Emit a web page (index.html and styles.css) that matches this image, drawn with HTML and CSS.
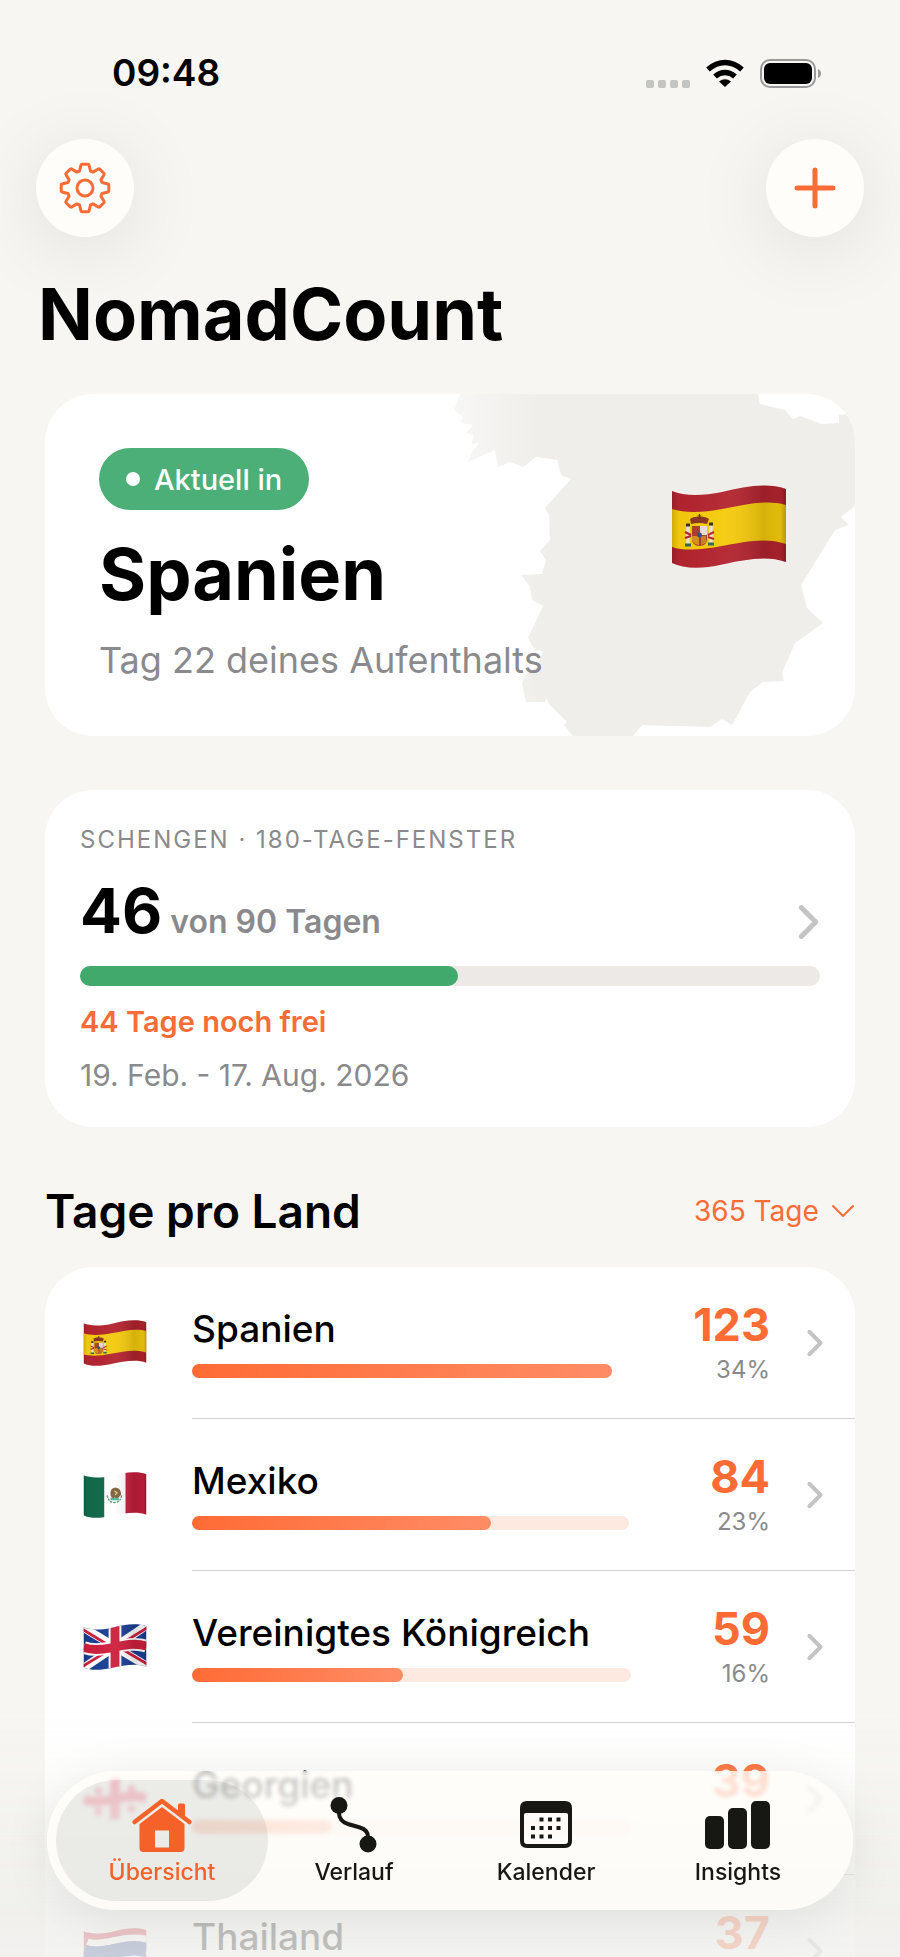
FILE: index.html
```html
<!DOCTYPE html>
<html lang="de">
<head>
    <meta charset="UTF-8">
    <meta name="viewport" content="width=device-width, initial-scale=1.0">
    <title>NomadCount</title>
    <link rel="stylesheet" href="styles.css">
</head>
<body>
    <!-- Flags, shared by the hero card and the list -->
    <svg class="sprite" aria-hidden="true">
        <defs>
            <clipPath id="wave">
                <path d="M0 6C12 11 30 11 50 7C72 2 94 -3 114 4V77C94 70 72 75 50 79.500C30 84 12 84 0 78Z"/>
            </clipPath>
            <linearGradient id="shade">
                <stop offset="0" stop-color="#000" stop-opacity="0.15"/>
                <stop offset="0.060" stop-color="#000" stop-opacity="0.020"/>
                <stop offset="0.450" stop-color="#fff" stop-opacity="0.040"/>
                <stop offset="0.800" stop-color="#000" stop-opacity="0.130"/>
                <stop offset="0.950" stop-color="#000" stop-opacity="0.080"/>
                <stop offset="1" stop-color="#000" stop-opacity="0.250"/>
            </linearGradient>
            <symbol id="flag-es" viewBox="0 0 114 83">
                <g clip-path="url(#wave)">
                    <rect width="114" height="83" fill="#b3242f"/>
                    <path d="M0 24C12 28 30 28 50 24C72 20 94 14 114 20V59C94 52 72 57 50 61C30 65 12 66 0 62Z" fill="#f5cb0c"/>
                    <path d="M20 41H35V54Q35 61 27.500 61Q20 61 20 54Z" fill="#a8402c"/>
                    <path d="M28 41H35V50H28Z" fill="#eadfd6"/>
                    <path d="M20 51H27V60Q20 59 20 54Z" fill="#d9901c"/>
                    <path d="M29 51H34V58L29 60Z" fill="#c97f26"/>
                    <circle cx="27.500" cy="50" r="2.500" fill="#34508c"/>
                    <path d="M19 39L18 34Q22 31 27.500 32Q33 31 37 34L35 39Q27 37 19 39Z" fill="#8a3522"/>
                    <path d="M27.500 29V34M25.500 31H29.500" stroke="#5b3214" stroke-width="1.200"/>
                    <path d="M16 41V60M39 41V60" stroke="#e9e3d6" stroke-width="3.500"/>
                    <path d="M13 47L19 50M13 53L19 51M36 50L42 47M36 52L42 54" stroke="#b3242f" stroke-width="2"/>
                    <path d="M14 40H18M37 39H41" stroke="#3a3020" stroke-width="3"/>
                    <path d="M13 60H19M36 59H42" stroke="#31684f" stroke-width="3"/>
                    <rect width="114" height="83" fill="url(#shade)"/>
                </g>
            </symbol>
            <symbol id="flag-mx" viewBox="0 0 114 83">
                <g clip-path="url(#wave)">
                    <rect width="38" height="83" fill="#11694a"/>
                    <rect x="38" width="38" height="83" fill="#fff"/>
                    <rect x="76" width="38" height="83" fill="#c51e3c"/>
                    <path d="M43 42Q45 55 56 55Q67 55 69 42" fill="none" stroke="#5d9a6b" stroke-width="2.500" stroke-dasharray="4 2"/>
                    <path d="M49 42Q47 29 58 28Q68 29 68 41L62 48L56 46L52 49Z" fill="#80613b"/>
                    <path d="M56 34L61 38L57 41" fill="none" stroke="#e6cf9c" stroke-width="2"/>
                    <path d="M49 49H64" stroke="#45b7a8" stroke-width="4"/>
                    <rect width="114" height="83" fill="url(#shade)"/>
                </g>
            </symbol>
            <symbol id="flag-gb" viewBox="0 0 114 83">
                <g clip-path="url(#wave)">
                    <rect width="114" height="83" fill="#1c3f94"/>
                    <path d="M-4 4L118 78M-4 82L118 0" stroke="#fff" stroke-width="15"/>
                    <path d="M-4 8L50 41M64 42L118 74M-4 78L50 45M64 38L118 5" stroke="#cf1f3d" stroke-width="5"/>
                    <path d="M57 0V83M0 42C12 47 30 47 50 43C72 38 94 33 114 40" fill="none" stroke="#fff" stroke-width="23"/>
                    <path d="M57 0V83M0 42C12 47 30 47 50 43C72 38 94 33 114 40" fill="none" stroke="#cf1f3d" stroke-width="16"/>
                    <rect width="114" height="83" fill="url(#shade)"/>
                </g>
            </symbol>
            <symbol id="flag-ge" viewBox="0 0 114 83">
                <g clip-path="url(#wave)">
                    <rect width="114" height="83" fill="#fff"/>
                    <path d="M57 0V83M0 42C12 47 30 47 50 43C72 38 94 33 114 40" fill="none" stroke="#ff1f4b" stroke-width="17"/>
                    <path d="M27 20V34M20 27H34M87 16V30M80 23H94M27 57V71M20 64H34M87 52V66M80 59H94" stroke="#ff1f4b" stroke-width="6"/>
                </g>
            </symbol>
            <symbol id="flag-th" viewBox="0 0 114 83">
                <g clip-path="url(#wave)">
                    <rect width="114" height="83" fill="#d01f37"/>
                    <path d="M0 42C12 47 30 47 50 43C72 38 94 33 114 40" fill="none" stroke="#fff" stroke-width="50"/>
                    <path d="M0 42C12 47 30 47 50 43C72 38 94 33 114 40" fill="none" stroke="#27408f" stroke-width="26"/>
                </g>
            </symbol>
            <symbol id="chevron" viewBox="0 0 16 26">
                <path d="M3 3L13 13L3 23" fill="none" stroke="currentColor" stroke-width="3.500" stroke-linecap="round" stroke-linejoin="round"/>
            </symbol>
        </defs>
    </svg>

    <div class="app">
        <div class="statusbar">
            <span class="time">09:48</span>
            <div class="status-icons">
                <svg width="44" height="8" viewBox="0 0 44 8" class="dots" aria-hidden="true">
                    <g fill="#c4c4c2">
                        <rect width="8" height="8" rx="2"/>
                        <rect x="12" width="8" height="8" rx="2"/>
                        <rect x="24" width="8" height="8" rx="2"/>
                        <rect x="36" width="8" height="8" rx="2"/>
                    </g>
                </svg>
                <svg width="38" height="29" viewBox="0 0 38 29" aria-hidden="true">
                    <g fill="none" stroke="#000" stroke-width="5.500">
                        <path d="M2 10.500Q10 3.500 19 3.500Q28 3.500 36 10.500"/>
                        <path d="M9 17.500Q13.500 13.500 19 13.500Q24.500 13.500 29 17.500"/>
                    </g>
                    <path d="M13 22.500Q19 18 25 22.500L19 28Z"/>
                </svg>
                <svg width="62" height="29" viewBox="0 0 62 29" aria-hidden="true">
                    <rect x="1" y="1" width="54" height="27" rx="9" fill="none" stroke="#999" stroke-width="2"/>
                    <rect x="4" y="4" width="48" height="21" rx="6"/>
                    <path d="M58 10Q61 11.500 61 14.500Q61 17.500 58 19Z" fill="#999"/>
                </svg>
            </div>
        </div>

        <header>
            <div class="toolbar">
                <button type="button" class="round-btn" aria-label="Einstellungen">
                    <svg width="52" height="52" viewBox="-26 -26 52 52" fill="none" stroke="currentColor" stroke-width="3" stroke-linejoin="round">
                        <path d="M-5.500 -17L-4 -23Q-3.800 -23.800 -3 -23.800H3Q3.800 -23.800 4 -23L5.500 -17L8.100 -15.900L13.200 -19Q14 -19.500 14.700 -18.900L18.900 -14.700Q19.500 -14 19 -13.200L15.900 -8.100L17 -5.500L23 -4Q23.800 -3.800 23.800 -3V3Q23.800 3.800 23 4L17 5.500L15.900 8.100L19 13.200Q19.500 14 18.900 14.700L14.700 18.900Q14 19.500 13.200 19L8.100 15.900L5.500 17L4 23Q3.800 23.800 3 23.800H-3Q-3.800 23.800 -4 23L-5.500 17L-8.100 15.900L-13.200 19Q-14 19.500 -14.700 18.900L-18.900 14.700Q-19.500 14 -19 13.200L-15.900 8.100L-17 5.500L-23 4Q-23.800 3.800 -23.800 3V-3Q-23.800 -3.800 -23 -4L-17 -5.500L-15.900 -8.100L-19 -13.200Q-19.500 -14 -18.900 -14.700L-14.700 -18.900Q-14 -19.500 -13.200 -19L-8.100 -15.900Z"/>
                        <circle r="8"/>
                    </svg>
                </button>
                <button type="button" class="round-btn" aria-label="Hinzufügen">
                    <svg width="42" height="42" viewBox="0 0 42 42" stroke="currentColor" stroke-width="5" stroke-linecap="round">
                        <path d="M21 3V39M3 21H39"/>
                    </svg>
                </button>
            </div>
            <h1>NomadCount</h1>
        </header>

        <main>
            <section class="card current">
                <svg class="map" width="405" height="342" viewBox="0 0 405 342" aria-hidden="true">
                    <linearGradient id="coast" gradientUnits="userSpaceOnUse" x1="0" y1="0" x2="90" y2="0">
                        <stop offset="0" stop-color="#f7f7f7"/>
                        <stop offset="1" stop-color="#f0eeea"/>
                    </linearGradient>
                    <path fill="url(#coast)" d="M10 0L4 16L13 23L11 29L23 31L16 39L23 41L22 50L29 49L22 58L18 68L45 56L48 73L60 68L73 73L86 63L107 66L111 81L121 85L95 114L99 121L100 146L90 157L96 166L92 180L71 181L80 193L82 206L93 212L78 244L85 256L93 257L88 272L75 281L72 289L76 308L95 308L97 304L98 309L117 328L114 331L123 342H183L192 331L260 333L272 325L282 331L300 298L313 288L334 287L332 279L345 249L373 229L357 214L351 191L385 136L399 131L391 123L406 111V19L389 21V29L372 30L350 22L343 25L335 16L310 10L308 0Z"/>
                </svg>
                <div class="current-text">
                    <span class="pill"><span class="dot"></span>Aktuell in</span>
                    <h2>Spanien</h2>
                    <p>Tag 22 deines Aufenthalts</p>
                </div>
                <svg class="current-flag" width="114" height="83" role="img" aria-label="Flagge Spanien"><use href="#flag-es"/></svg>
            </section>

            <section class="card schengen">
                <p class="label">SCHENGEN · 180-TAGE-FENSTER</p>
                <div class="count">
                    <p><strong>46</strong> von 90 Tagen</p>
                    <svg class="chevron" width="23" height="38"><use href="#chevron"/></svg>
                </div>
                <div class="meter"><div class="meter-fill" style="width: 51.100%"></div></div>
                <p class="free">44 Tage noch frei</p>
                <p class="range">19. Feb. - 17. Aug. 2026</p>
            </section>

            <div class="list-head">
                <h3>Tage pro Land</h3>
                <div class="period">
                    <select aria-label="Zeitraum">
                        <option>365 Tage</option>
                        <option>180 Tage</option>
                        <option>90 Tage</option>
                    </select>
                    <svg width="24" height="14" viewBox="0 0 24 14" aria-hidden="true">
                        <path d="M2 2L12 12L22 2" fill="none" stroke="currentColor" stroke-width="2" stroke-linecap="round" stroke-linejoin="round"/>
                    </svg>
                </div>
            </div>

            <section class="card countries">
                <a class="country" href="#spanien">
                    <svg class="flag" width="64" height="46"><use href="#flag-es"/></svg>
                    <div class="country-body">
                        <div class="country-info">
                            <span class="name">Spanien</span>
                            <div class="bar"><div class="bar-fill" style="width: 100%"></div></div>
                        </div>
                        <div class="days"><strong>123</strong><span>34%</span></div>
                        <svg class="chevron" width="18" height="30"><use href="#chevron"/></svg>
                    </div>
                </a>
                <a class="country" href="#mexiko">
                    <svg class="flag" width="64" height="46"><use href="#flag-mx"/></svg>
                    <div class="country-body">
                        <div class="country-info">
                            <span class="name">Mexiko</span>
                            <div class="bar"><div class="bar-fill" style="width: 68.300%"></div></div>
                        </div>
                        <div class="days"><strong>84</strong><span>23%</span></div>
                        <svg class="chevron" width="18" height="30"><use href="#chevron"/></svg>
                    </div>
                </a>
                <a class="country" href="#uk">
                    <svg class="flag" width="64" height="46"><use href="#flag-gb"/></svg>
                    <div class="country-body">
                        <div class="country-info">
                            <span class="name">Vereinigtes Königreich</span>
                            <div class="bar"><div class="bar-fill" style="width: 48%"></div></div>
                        </div>
                        <div class="days"><strong>59</strong><span>16%</span></div>
                        <svg class="chevron" width="18" height="30"><use href="#chevron"/></svg>
                    </div>
                </a>
                <a class="country" href="#georgien">
                    <svg class="flag" width="64" height="46"><use href="#flag-ge"/></svg>
                    <div class="country-body">
                        <div class="country-info">
                            <span class="name">Georgien</span>
                            <div class="bar"><div class="bar-fill" style="width: 31.700%"></div></div>
                        </div>
                        <div class="days"><strong>39</strong></div>
                        <svg class="chevron" width="18" height="30"><use href="#chevron"/></svg>
                    </div>
                </a>
                <a class="country" href="#thailand">
                    <svg class="flag" width="64" height="46"><use href="#flag-th"/></svg>
                    <div class="country-body">
                        <div class="country-info">
                            <span class="name">Thailand</span>
                            <div class="bar"><div class="bar-fill" style="width: 30%"></div></div>
                        </div>
                        <div class="days"><strong>37</strong></div>
                        <svg class="chevron" width="18" height="30"><use href="#chevron"/></svg>
                    </div>
                </a>
            </section>
        </main>

        <div class="fade"></div>
        <nav class="tabbar">
            <a class="tab active" href="#uebersicht">
                <svg width="64" height="56" viewBox="0 0 64 56" fill="currentColor">
                    <path d="M4.500 25L32 4L59.500 25" fill="none" stroke="currentColor" stroke-width="4.500" stroke-linecap="round" stroke-linejoin="round"/>
                    <path d="M48 8Q48 6.500 49.500 6.500H53.500Q55 6.500 55 8V21L48 15.500Z"/>
                    <path fill-rule="evenodd" d="M32 10L54.500 27V51Q54.500 55 50.500 55H13.500Q9.500 55 9.500 51V27ZM25 33.500V50.500H39V33.500Z"/>
                </svg>
                <span>Übersicht</span>
            </a>
            <a class="tab" href="#verlauf">
                <svg width="64" height="56" viewBox="0 0 64 56" fill="currentColor">
                    <circle cx="17" cy="8.500" r="8.500"/>
                    <circle cx="46" cy="47" r="8.500"/>
                    <path d="M17 9V16Q17 24 26 27L38 30.500Q46 33 46 40V46" fill="none" stroke="currentColor" stroke-width="4"/>
                </svg>
                <span>Verlauf</span>
            </a>
            <a class="tab" href="#kalender">
                <svg width="64" height="56" viewBox="0 0 64 56" fill="currentColor">
                    <path fill-rule="evenodd" d="M13 4H51Q58 4 58 11V44Q58 51 51 51H13Q6 51 6 44V11Q6 4 13 4ZM12 16Q10 16 10 18V44Q10 47 13 47H51Q54 47 54 44V18Q54 16 52 16Z"/>
                    <path d="M25.500 22.500H29.500M34 22.500H38M42.500 22.500H46.500M17 31H21M25.500 31H29.500M34 31H38M42.500 31H46.500M17 39.500H21M25.500 39.500H29.500M34 39.500H38" stroke="currentColor" stroke-width="4"/>
                </svg>
                <span>Kalender</span>
            </a>
            <a class="tab" href="#insights">
                <svg width="66" height="56" viewBox="0 0 66 56" fill="currentColor">
                    <rect y="19" width="19" height="33" rx="5"/>
                    <rect x="23" y="11" width="19" height="41" rx="5"/>
                    <rect x="46" y="4" width="19" height="48" rx="5"/>
                </svg>
                <span>Insights</span>
            </a>
        </nav>
    </div>
</body>
</html>
```
FILE: styles.css
```css
* {
    box-sizing: border-box;
}
body {
    font-family: Inter, "Liberation Sans", sans-serif;
    margin: 0;
    background-color: #f7f6f2;
    color: #000;
}
h1, h2, h3, p {
    margin: 0;
}
a {
    color: inherit;
    text-decoration: none;
}
svg {
    display: block;
    flex: none;
}
.sprite {
    position: absolute;
    width: 0;
    height: 0;
}
.app {
    height: 100vh;
    overflow: hidden;
}

/* Status bar */
.statusbar {
    display: flex;
    justify-content: space-between;
    align-items: center;
    padding: 51px 78px 0 112px;
}
.time {
    font-size: 37px;
    font-weight: 600;
    line-height: 44px;
}
.status-icons {
    display: flex;
    align-items: center;
    gap: 16px;
}
.dots {
    align-self: flex-end;
}

/* Header */
header {
    padding: 44px 36px 36px;
}
.toolbar {
    display: flex;
    justify-content: space-between;
    margin-bottom: 33px;
}
.round-btn {
    display: flex;
    align-items: center;
    justify-content: center;
    width: 98px;
    height: 98px;
    padding: 0;
    border: none;
    border-radius: 50%;
    background-color: #fffdfa;
    color: #f96c37;
    box-shadow: 0 12px 80px rgba(0, 0, 0, 0.1);
    cursor: pointer;
}
h1 {
    padding-left: 2px;
    font-size: 72px;
    font-weight: 700;
    line-height: 88px;
}

/* Cards */
main {
    padding: 0 45px;
}
.card {
    background-color: #fff;
    border-radius: 48px;
}
.current {
    position: relative;
    display: flex;
    justify-content: space-between;
    align-items: flex-start;
    overflow: hidden;
    padding: 54px 69px 54px 54px;
    margin-bottom: 54px;
}
.map {
    position: absolute;
    top: 0;
    right: 0;
}
.current-text {
    position: relative;
}
.current-flag {
    position: relative;
    margin-top: 37px;
}
.pill {
    display: inline-flex;
    align-items: center;
    gap: 14px;
    height: 62px;
    padding: 0 27px;
    border-radius: 31px;
    background-color: #4caf78;
    color: #fff;
    font-size: 29px;
    font-weight: 500;
}
.dot {
    width: 14px;
    height: 14px;
    border-radius: 50%;
    background-color: #fff;
}
h2 {
    margin: 20px 0;
    font-size: 72px;
    font-weight: 700;
    line-height: 88px;
}
.current-text p {
    font-size: 36px;
    line-height: 44px;
    color: #8a8a8c;
}

.schengen {
    padding: 35px;
    margin-bottom: 55px;
}
.label {
    font-size: 24px;
    line-height: 30px;
    letter-spacing: 2px;
    color: #8a8a8c;
}
.count {
    display: flex;
    justify-content: space-between;
    align-items: flex-end;
    margin: 26px 0 25px;
}
.count p {
    font-size: 32px;
    font-weight: 600;
    line-height: 38px;
    color: #8a8a8c;
}
.count strong {
    font-size: 62px;
    font-weight: 700;
    line-height: 60px;
    color: #000;
}
.chevron {
    color: #c4c4c6;
}
.meter {
    height: 20px;
    border-radius: 10px;
    background-color: #ece9e6;
}
.meter-fill {
    height: 100%;
    border-radius: 10px;
    background-color: #40a96b;
}
.free, .range {
    margin-top: 19px;
    line-height: 34px;
}
.free {
    font-size: 29px;
    font-weight: 600;
    color: #f96c37;
}
.range {
    font-size: 30px;
    color: #8a8a8c;
}

/* Country list */
.list-head {
    display: flex;
    justify-content: space-between;
    align-items: center;
    margin-bottom: 27px;
}
h3 {
    font-size: 46px;
    font-weight: 600;
    line-height: 58px;
}
.period {
    display: flex;
    align-items: center;
    gap: 12px;
    color: #f96c37;
}
.period select {
    appearance: none;
    padding: 0;
    border: none;
    background: none;
    color: inherit;
    font-family: inherit;
    font-size: 28px;
    cursor: pointer;
}
.country {
    display: flex;
    align-items: center;
    gap: 45px;
    padding-left: 38px;
}
.country-body {
    flex: 1;
    display: flex;
    align-items: center;
    padding: 33px 31px 33px 0;
    border-bottom: 1px solid #d2d2d4;
}
.country-info {
    flex: 1;
}
.name {
    display: block;
    margin-bottom: 13px;
    font-size: 37px;
    font-weight: 500;
    line-height: 44px;
}
.bar {
    height: 14px;
    border-radius: 7px;
    background-color: #fee9e1;
}
.bar-fill {
    height: 100%;
    border-radius: 7px;
    background: linear-gradient(90deg, #ff6b35, #ff8c66);
}
.days {
    display: flex;
    flex-direction: column;
    align-items: flex-end;
    gap: 5px;
    min-height: 85px;
    margin: 0 36px 0 81px;
    color: #8a8a8c;
    font-size: 24px;
    line-height: 30px;
}
.days strong {
    color: #ff6b35;
    font-size: 45px;
    font-weight: 700;
    line-height: 50px;
}

/* Tab bar */
.fade {
    position: fixed;
    left: 0;
    right: 0;
    bottom: 0;
    height: 260px;
    background: linear-gradient(rgba(238, 238, 235, 0), rgba(238, 238, 235, 0.12) 28%, rgba(238, 238, 235, 0.78) 80%, rgba(240, 240, 237, 0.8));
    pointer-events: none;
}
.tabbar {
    position: fixed;
    left: 47px;
    right: 47px;
    bottom: 47px;
    display: flex;
    padding: 9px 19px;
    border-radius: 70px;
    background-color: rgba(255, 254, 250, 0.74);
    backdrop-filter: blur(2px);
    box-shadow: 0 8px 50px rgba(0, 0, 0, 0.08);
}
.tab {
    flex: 1;
    display: flex;
    flex-direction: column;
    align-items: center;
    gap: 5px;
    margin: 0 -10px;
    padding: 17px 0 15px;
    border-radius: 61px;
    color: #171714;
    font-size: 23px;
    font-weight: 500;
    line-height: 28px;
}
.tab.active {
    background-color: rgba(0, 0, 0, 0.075);
    color: #f4622a;
}
```
